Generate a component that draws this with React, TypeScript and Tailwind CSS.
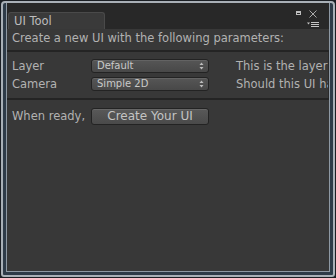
import React from "react";

const font = { fontFamily: '"DejaVu Sans", Verdana, sans-serif' };

function UpDown() {
  return (
    <svg width="5" height="8" viewBox="0 0 5 8" className="shrink-0">
      <path d="M2.5 0.5 L4.5 3 L0.5 3 Z" fill="#bdbdbd" />
      <path d="M0.5 5 L4.5 5 L2.5 7.5 Z" fill="#bdbdbd" />
    </svg>
  );
}

function Dropdown({ value }: { value: string }) {
  return (
    <div className="w-[118px] h-[14px] shrink-0 rounded-[3px] border border-[#232323] bg-gradient-to-b from-[#565656] to-[#484848] flex items-center justify-between pl-[5px] pr-[4px] shadow-[inset_0_1px_0_#636363]">
      <span className="text-[10px] leading-[14px] text-[#c9c9c9]">{value}</span>
      <UpDown />
    </div>
  );
}

export default function App() {
  return (
    <div className="w-[336px] h-[278px] bg-[#1b1f24] p-px" style={font}>
      <div className="h-full rounded-t-[4px] rounded-b-[3px] border-2 border-[#a9b0b7] bg-[#2e3b48] px-[3px] pb-[3px] flex flex-col">
        <div className="flex-1 border-x border-b border-[#8e99a4] flex flex-col overflow-hidden">
          {/* tab strip */}
          <div className="h-[26px] shrink-0 bg-[#282828] flex items-end justify-between">
            <div className="ml-px w-[97px] h-[17px] rounded-t-[3px] border border-b-0 border-[#4a4a4a] bg-[#3a3a3a] pl-[5px] text-[11.5px] leading-[16px] text-[#bdbdbd]">
              UI Tool
            </div>
            <div className="self-stretch w-[36px] relative">
              {/* maximize */}
              <div className="absolute left-[3px] top-[8px] w-[5px] h-[4px] border border-t-2 border-[#bfbfbf]" />
              {/* close */}
              <svg className="absolute left-[16px] top-[7px]" width="8" height="8" viewBox="0 0 8 8">
                <path d="M0.5 0.5 L7.5 7.5 M7.5 0.5 L0.5 7.5" stroke="#b8b8b8" strokeWidth="0.9" />
              </svg>
              {/* menu */}
              <svg className="absolute left-[14px] top-[19px]" width="12" height="5" viewBox="0 0 12 5">
                <path d="M0 0.5 L3 0.5 L1.5 2.5 Z" fill="#c4c4c4" />
                <rect x="4" y="0" width="8" height="1" fill="#c4c4c4" />
                <rect x="4" y="2" width="8" height="1" fill="#c4c4c4" />
                <rect x="4" y="4" width="8" height="1" fill="#c4c4c4" />
              </svg>
            </div>
          </div>

          {/* body */}
          <div className="flex-1 bg-[#383838] flex flex-col text-[11.5px] text-[#b2b2b2]">
            <div className="h-[21px] shrink-0 pt-[2px] pl-[5px] leading-[14px] whitespace-nowrap">
              Create a new UI with the following parameters:
            </div>
            <div className="h-[2px] shrink-0 bg-[#242424]" />
            <div className="shrink-0 flex">
              <div className="flex-1 min-w-0 pt-[7px] pb-[7px] pl-[5px] flex flex-col gap-[4px] overflow-hidden">
                <div className="flex items-center h-[14px] leading-[14px] whitespace-nowrap">
                  <span className="w-[79px] shrink-0">Layer</span>
                  <Dropdown value="Default" />
                  <span className="ml-[27px]">This is the layer the UI will be drawn on</span>
                </div>
                <div className="flex items-center h-[14px] leading-[14px] whitespace-nowrap">
                  <span className="w-[79px] shrink-0">Camera</span>
                  <Dropdown value="Simple 2D" />
                  <span className="ml-[27px]">Should this UI have its own camera?</span>
                </div>
              </div>
              <div className="w-px shrink-0 bg-[#2a2a2a]" />
            </div>
            <div className="h-[2px] shrink-0 bg-[#242424]" />
            <div className="pt-[8px] pl-[5px] flex items-center">
              <span className="w-[79px] shrink-0 leading-[17px]">When ready,</span>
              <button className="w-[118px] h-[17px] rounded-[3px] border border-[#232323] bg-gradient-to-b from-[#595959] to-[#4a4a4a] shadow-[inset_0_1px_0_#666666] text-[12px] leading-[15px] text-[#c4c4c4]">
                Create Your UI
              </button>
            </div>
          </div>
        </div>
      </div>
    </div>
  );
}
